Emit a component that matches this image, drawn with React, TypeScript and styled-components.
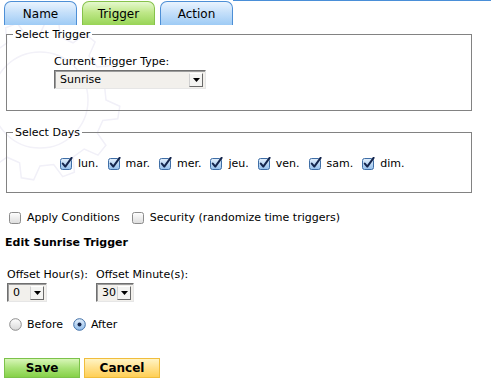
import React from "react";
import styled, { createGlobalStyle, css } from "styled-components";

const GlobalStyle = createGlobalStyle`
  html, body { margin: 0; padding: 0; background: #ffffff; }
  body {
    font-family: "DejaVu Sans", Verdana, sans-serif;
    font-size: 11px;
    color: #000;
  }
  * { box-sizing: border-box; }
`;

const Page = styled.div`
  position: relative;
  width: 491px;
  height: 384px;
  overflow: hidden;
`;

const Watermark = styled.svg`
  position: absolute;
  left: -50px;
  top: 10px;
  pointer-events: none;
`;

const Content = styled.div`
  position: relative;
  display: flex;
  flex-direction: column;
  align-items: flex-start;
`;

const TabBar = styled.div`
  display: flex;
  align-items: flex-end;
  height: 25px;
  padding-left: 4px;
  gap: 5px;
  width: 100%;
`;

const Tab = styled.div<{ $active?: boolean }>`
  width: 73px;
  height: 24px;
  display: flex;
  align-items: center;
  justify-content: center;
  font-size: 12px;
  border: 1px solid #4d8fd6;
  border-bottom: none;
  border-radius: 7px 7px 0 0;
  background: linear-gradient(#eaf4fe 0%, #c6e0fa 45%, #9ecbf5 100%);
  ${(p) =>
    p.$active &&
    css`
      border-color: #86c24b;
      background: linear-gradient(#e6f8cf 0%, #bfe889 45%, #98d456 100%);
    `}
`;

const TabLine = styled.div`
  flex: 1;
  align-self: flex-start;
  margin-left: -5px;
  border-top: 1px solid #4a8fd8;
`;

const Fieldset = styled.fieldset<{ $mt: number }>`
  margin: ${(p) => p.$mt}px 0 0 6px;
  width: 466px;
  border: 1px solid #828282;
  padding: 0;
  min-width: 0;
`;

const Legend = styled.legend`
  margin-left: 6px;
  padding: 0 2px;
  line-height: 13px;
`;

const TriggerBody = styled.div`
  padding: 14px 0 21px 47px;
  display: flex;
  flex-direction: column;
  gap: 2px;
  line-height: 13px;
`;

const SelectBox = styled.div<{ $w: number }>`
  width: ${(p) => p.$w}px;
  height: 19px;
  display: flex;
  align-items: center;
  background: #f2f0ec;
  border: 1px solid;
  border-color: #6f6f6f #e6e6e6 #e6e6e6 #6f6f6f;
  box-shadow: inset 1px 1px 0 #9c9c9c;
  padding: 0 2px 0 5px;
`;

const SelectText = styled.span`
  flex: 1;
`;

const ArrowBtn = styled.span`
  width: 14px;
  height: 14px;
  display: flex;
  align-items: center;
  justify-content: center;
  background: #f4f4f2;
  border: 1px solid;
  border-color: #ffffff #6a6a6a #6a6a6a #d0d0d0;
`;

const DaysBody = styled.div`
  padding: 18px 0 22px 53px;
  display: flex;
  gap: 9px;
`;

const CheckItem = styled.label`
  display: flex;
  align-items: center;
  gap: 5px;
  line-height: 13px;
`;

const OptionsRow = styled.div`
  margin: 18px 0 0 9px;
  display: flex;
  gap: 12px;
`;

const Heading = styled.div`
  margin: 12px 0 0 5px;
  font-weight: bold;
  line-height: 13px;
`;

const OffsetRow = styled.div`
  margin: 19px 0 0 7px;
  display: flex;
  gap: 8px;
`;

const OffsetCol = styled.div`
  display: flex;
  flex-direction: column;
  gap: 2px;
  line-height: 13px;
`;

const RadioRow = styled.div`
  margin: 16px 0 0 9px;
  display: flex;
  gap: 10px;
`;

const ButtonRow = styled.div`
  margin: 27px 0 0 4px;
  display: flex;
  gap: 4px;
`;

const Button = styled.button<{ $kind: "save" | "cancel" }>`
  width: 76px;
  height: 20px;
  padding: 0;
  font-family: "DejaVu Sans", Verdana, sans-serif;
  font-size: 12px;
  font-weight: bold;
  color: #000;
  border: 1px solid;
  ${(p) =>
    p.$kind === "save"
      ? css`
          border-color: #7cc24a;
          background: linear-gradient(#d8f6b8 0%, #a8e276 50%, #86d148 100%);
        `
      : css`
          border-color: #f0bd3c;
          background: linear-gradient(#fff4c4 0%, #ffe08a 50%, #ffcf55 100%);
        `}
`;

const Checkbox = ({ checked }: { checked?: boolean }) => (
  <svg width="13" height="13" viewBox="0 0 13 13">
    <defs>
      <linearGradient id="cbBlue" x1="0" y1="0" x2="0" y2="1">
        <stop offset="0" stopColor="#e4f0fc" />
        <stop offset="1" stopColor="#93bfec" />
      </linearGradient>
      <linearGradient id="cbGray" x1="0" y1="0" x2="0" y2="1">
        <stop offset="0" stopColor="#ffffff" />
        <stop offset="1" stopColor="#dcdcdc" />
      </linearGradient>
    </defs>
    <rect
      x="0.5"
      y="1.5"
      width="11"
      height="11"
      rx="2"
      fill={checked ? "url(#cbBlue)" : "url(#cbGray)"}
      stroke={checked ? "#3f6ea6" : "#8c8c8c"}
    />
    {checked && (
      <path
        d="M2.8 6.6 L5.3 9.6 L11.6 0.8"
        fill="none"
        stroke="#15264d"
        strokeWidth="2"
        strokeLinecap="round"
        strokeLinejoin="round"
      />
    )}
  </svg>
);

const Radio = ({ checked }: { checked?: boolean }) => (
  <svg width="13" height="13" viewBox="0 0 13 13">
    <defs>
      <linearGradient id="rbBlue" x1="0" y1="0" x2="0" y2="1">
        <stop offset="0" stopColor="#e4f0fc" />
        <stop offset="1" stopColor="#8fbbea" />
      </linearGradient>
      <linearGradient id="rbGray" x1="0" y1="0" x2="0" y2="1">
        <stop offset="0" stopColor="#ffffff" />
        <stop offset="1" stopColor="#d8d8d8" />
      </linearGradient>
    </defs>
    <circle
      cx="6.5"
      cy="6.5"
      r="5.8"
      fill={checked ? "url(#rbBlue)" : "url(#rbGray)"}
      stroke={checked ? "#3f6ea6" : "#8c8c8c"}
    />
    {checked && <circle cx="6.5" cy="6.5" r="2" fill="#15264d" />}
  </svg>
);

const Arrow = () => (
  <svg width="7" height="4" viewBox="0 0 7 4">
    <path d="M0 0 H7 L3.5 4 Z" fill="#000" />
  </svg>
);

const Select = ({ value, width }: { value: string; width: number }) => (
  <SelectBox $w={width}>
    <SelectText>{value}</SelectText>
    <ArrowBtn>
      <Arrow />
    </ArrowBtn>
  </SelectBox>
);

const gearPath = (() => {
  const cx = 90;
  const cy = 90;
  const teeth = 12;
  const rO = 80;
  const rI = 66;
  const pts: string[] = [];
  for (let i = 0; i < teeth; i++) {
    const a = (i / teeth) * Math.PI * 2;
    const step = (Math.PI * 2) / teeth;
    const angs = [a, a + step * 0.15, a + step * 0.45, a + step * 0.6];
    const rs = [rI, rO, rO, rI];
    angs.forEach((an, k) => {
      pts.push(`${(cx + rs[k] * Math.cos(an)).toFixed(1)},${(cy + rs[k] * Math.sin(an)).toFixed(1)}`);
    });
  }
  return "M" + pts.join(" L") + " Z";
})();

const days = ["lun.", "mar.", "mer.", "jeu.", "ven.", "sam.", "dim."];

export default function App() {
  return (
    <>
      <GlobalStyle />
      <Page>
        <Watermark width="180" height="180" viewBox="0 0 180 180">
          <path d={gearPath} fill="none" stroke="#f1f0f8" strokeWidth="1.5" />
          <circle cx="90" cy="90" r="48" fill="none" stroke="#f2f1f8" strokeWidth="1.5" />
        </Watermark>
        <Content>
          <TabBar>
            <Tab>Name</Tab>
            <Tab $active>Trigger</Tab>
            <Tab>Action</Tab>
            <TabLine />
          </TabBar>

          <Fieldset $mt={3}>
            <Legend>Select Trigger</Legend>
            <TriggerBody>
              <span>Current Trigger Type:</span>
              <Select value="Sunrise" width={152} />
            </TriggerBody>
          </Fieldset>

          <Fieldset $mt={15}>
            <Legend>Select Days</Legend>
            <DaysBody>
              {days.map((d) => (
                <CheckItem key={d}>
                  <Checkbox checked />
                  <span>{d}</span>
                </CheckItem>
              ))}
            </DaysBody>
          </Fieldset>

          <OptionsRow>
            <CheckItem>
              <Checkbox />
              <span>Apply Conditions</span>
            </CheckItem>
            <CheckItem>
              <Checkbox />
              <span>Security (randomize time triggers)</span>
            </CheckItem>
          </OptionsRow>

          <Heading>Edit Sunrise Trigger</Heading>

          <OffsetRow>
            <OffsetCol>
              <span>Offset Hour(s):</span>
              <Select value="0" width={40} />
            </OffsetCol>
            <OffsetCol>
              <span>Offset Minute(s):</span>
              <Select value="30" width={38} />
            </OffsetCol>
          </OffsetRow>

          <RadioRow>
            <CheckItem>
              <Radio />
              <span>Before</span>
            </CheckItem>
            <CheckItem>
              <Radio checked />
              <span>After</span>
            </CheckItem>
          </RadioRow>

          <ButtonRow>
            <Button $kind="save">Save</Button>
            <Button $kind="cancel">Cancel</Button>
          </ButtonRow>
        </Content>
      </Page>
    </>
  );
}
